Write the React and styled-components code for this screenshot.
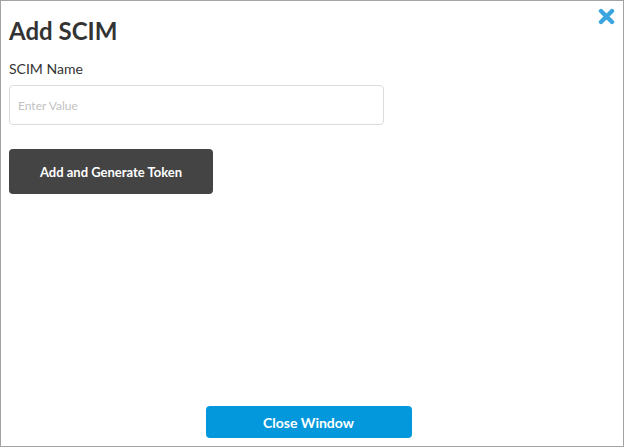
import React from 'react'
import styled, { createGlobalStyle } from 'styled-components'

const GlobalStyle = createGlobalStyle`
  html, body {
    margin: 0;
    padding: 0;
    background: #fff;
  }
  * {
    box-sizing: border-box;
  }
`

const Window = styled.div`
  position: relative;
  width: 624px;
  height: 447px;
  border: 1px solid #a3a3a3;
  background: #fff;
  display: flex;
  flex-direction: column;
  font-family: Lato, 'Open Sans', sans-serif;
  color: #333;
`

const Body = styled.div`
  flex: 1;
  display: flex;
  flex-direction: column;
  align-items: flex-start;
  padding: 0 8px;
`

const Title = styled.h1`
  margin: 15px 0 0;
  font-size: 24px;
  line-height: 29px;
  font-weight: 700;
  color: #333;
`

const Label = styled.label`
  margin-top: 15px;
  font-size: 14px;
  line-height: 17px;
  color: #333;
`

const Input = styled.input`
  margin-top: 8px;
  width: 375px;
  height: 40px;
  padding: 0 8px;
  border: 1px solid #dcdcdc;
  border-radius: 4px;
  font-family: Lato, sans-serif;
  font-size: 12px;
  color: #333;
  outline: none;

  &::placeholder {
    color: #c2c2c2;
  }
`

const DarkButton = styled.button`
  margin-top: 24px;
  width: 204px;
  height: 45px;
  border: none;
  border-radius: 4px;
  background: #444444;
  color: #fff;
  font-family: Lato, sans-serif;
  font-size: 13px;
  font-weight: 700;
  cursor: pointer;
`

const Footer = styled.div`
  display: flex;
  justify-content: center;
  padding: 0 7px 8px 0;
`

const CloseButton = styled.button`
  width: 206px;
  height: 32px;
  border: none;
  border-radius: 4px;
  background: #0398dc;
  color: #fff;
  font-family: Lato, sans-serif;
  font-size: 14px;
  font-weight: 700;
  cursor: pointer;
`

const CloseIcon = styled.button`
  position: absolute;
  top: 7px;
  right: 8px;
  width: 17px;
  height: 17px;
  padding: 0;
  border: none;
  background: none;
  cursor: pointer;
  display: flex;
`

export default function App() {
  return (
    <>
      <GlobalStyle />
      <Window>
        <CloseIcon aria-label="Close">
          <svg width="17" height="17" viewBox="0 0 17 17">
            <path
              d="M3 3 L14 14 M14 3 L3 14"
              stroke="#3ba5e0"
              strokeWidth="4.4"
              strokeLinecap="round"
              fill="none"
            />
          </svg>
        </CloseIcon>
        <Body>
          <Title>Add SCIM</Title>
          <Label htmlFor="scim-name">SCIM Name</Label>
          <Input id="scim-name" placeholder="Enter Value" />
          <DarkButton>Add and Generate Token</DarkButton>
        </Body>
        <Footer>
          <CloseButton>Close Window</CloseButton>
        </Footer>
      </Window>
    </>
  )
}
